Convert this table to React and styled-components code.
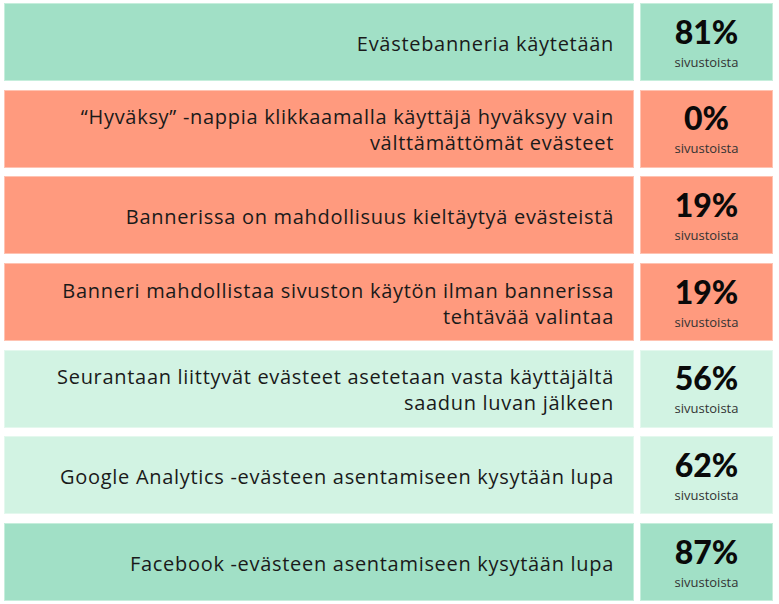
import styled, { createGlobalStyle } from 'styled-components';

const rows = [
  { text: 'Evästebanneria käytetään', value: '81%', tone: 'green' },
  { text: '“Hyväksy” -nappia klikkaamalla käyttäjä hyväksyy vain välttämättömät evästeet', value: '0%', tone: 'red' },
  { text: 'Bannerissa on mahdollisuus kieltäytyä evästeistä', value: '19%', tone: 'red' },
  { text: 'Banneri mahdollistaa sivuston käytön ilman bannerissa tehtävää valintaa', value: '19%', tone: 'red' },
  { text: 'Seurantaan liittyvät evästeet asetetaan vasta käyttäjältä saadun luvan jälkeen', value: '56%', tone: 'mint' },
  { text: 'Google Analytics -evästeen asentamiseen kysytään lupa', value: '62%', tone: 'mint' },
  { text: 'Facebook -evästeen asentamiseen kysytään lupa', value: '87%', tone: 'green' },
];

const tones = {
  green: { bg: '#a1e0c6', border: '#c6eedc' },
  red: { bg: '#ff9a7e', border: '#ffc3b2' },
  mint: { bg: '#d2f3e3', border: '#e4f8ee' },
};

export default function App() {
  return (
    <>
      <GlobalStyle />
      <Table>
        {rows.map((row, i) => (
          <Row key={i}>
            <Label tone={row.tone}>
              <LabelText>{row.text}</LabelText>
            </Label>
            <Stat tone={row.tone}>
              <Value>{row.value}</Value>
              <Caption>sivustoista</Caption>
            </Stat>
          </Row>
        ))}
      </Table>
    </>
  );
}

const GlobalStyle = createGlobalStyle`
  body {
    margin: 0;
    background: #ffffff;
    font-family: 'Open Sans', 'Liberation Sans', sans-serif;
  }
`;

const Table = styled.div`
  display: flex;
  flex-direction: column;
  gap: 8.7px;
  padding: 3px 6px 3px 4px;
`;

const Row = styled.div`
  display: grid;
  grid-template-columns: 1fr 133px;
  column-gap: 6px;
  height: 78px;
`;

const Cell = styled.div`
  box-sizing: border-box;
  background: ${({ tone }) => tones[tone].bg};
  border: 1px solid ${({ tone }) => tones[tone].border};
`;

const Label = styled(Cell)`
  display: flex;
  align-items: center;
  justify-content: flex-end;
  padding: 3px 19px 0 30px;
`;

const LabelText = styled.div`
  text-align: right;
  font-size: 20px;
  line-height: 26px;
  letter-spacing: 0.7px;
  color: #1a1a1a;
  max-width: 574px;
`;

const Stat = styled(Cell)`
  display: flex;
  flex-direction: column;
  align-items: center;
  justify-content: center;
`;

const Value = styled.div`
  font-family: 'Lato', sans-serif;
  font-size: 32px;
  font-weight: 900;
  line-height: 34px;
  color: #0a0a0a;
`;

const Caption = styled.div`
  font-size: 13px;
  line-height: 16px;
  color: #333;
  margin-top: 5px;
`;
